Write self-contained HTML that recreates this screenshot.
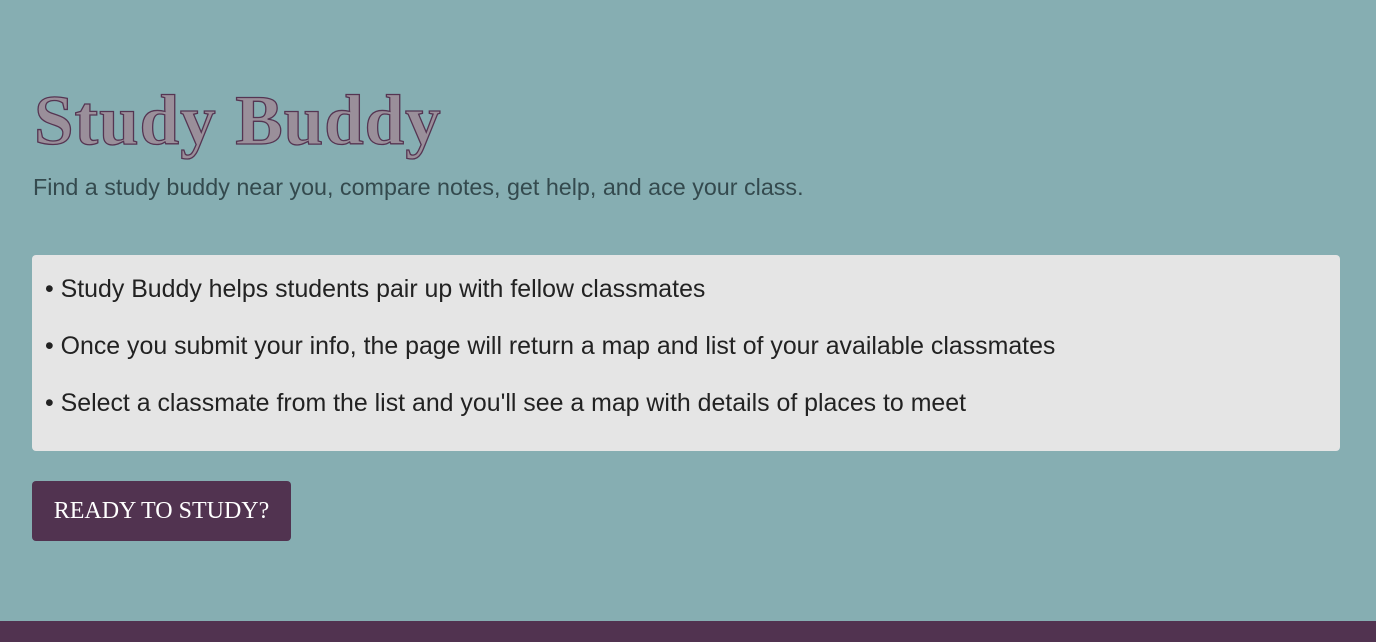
<!DOCTYPE html>
<html><head><meta charset="utf-8"><style>
html,body{margin:0;padding:0;}
body{width:1376px;height:642px;background:#86aeb2;position:relative;overflow:hidden;font-family:"Liberation Sans",sans-serif;}
h1{position:absolute;left:34px;top:76px;margin:0;font-family:"Liberation Serif",serif;font-size:71px;font-weight:bold;line-height:90px;color:#9a8f9a;-webkit-text-stroke:1.3px #553552;letter-spacing:1px;}
.sub{position:absolute;left:33px;top:174px;font-size:23.3px;color:#344a4e;font-weight:300;}
.box{position:absolute;left:32px;top:255px;width:1308px;height:196px;background:#e5e5e5;border-radius:4px;}
.box p{margin:0;position:absolute;left:13px;font-size:24.9px;color:#222;}
.btn{position:absolute;left:32px;top:481px;width:259px;height:60px;background:#513350;border-radius:4px;color:#fff;font-family:"Liberation Serif",serif;font-size:24px;line-height:60px;text-align:center;}
.foot{position:absolute;left:0;top:621px;width:1376px;height:21px;background:#513350;}
</style></head><body>
<h1>Study Buddy</h1>
<div class="sub">Find a study buddy near you, compare notes, get help, and ace your class.</div>
<div class="box">
<p style="top:20px">• Study Buddy helps students pair up with fellow classmates</p>
<p style="top:77px">• Once you submit your info, the page will return a map and list of your available classmates</p>
<p style="top:134px">• Select a classmate from the list and you'll see a map with details of places to meet</p>
</div>
<div class="btn">READY TO STUDY?</div>
<div class="foot"></div>
</body></html>
